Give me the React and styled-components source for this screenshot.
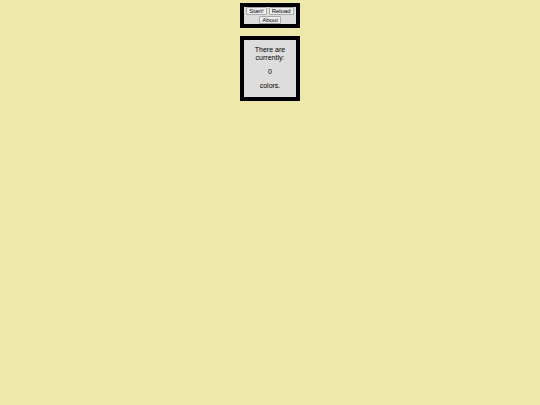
import React from "react";
import styled, { createGlobalStyle } from "styled-components";

const Global = createGlobalStyle`
  html, body { margin: 0; padding: 0; background: #eee8aa; }
  body { font-family: "Liberation Sans", Arial, sans-serif; }
`;

const Page = styled.div`
  display: flex;
  flex-direction: column;
  align-items: center;
  padding-top: 3px;
  gap: 8px;
`;

const Panel = styled.div`
  width: 52px;
  border: 4px solid #000;
  background: #dddddd;
  box-sizing: content-box;
  text-align: center;
  padding: ${(p) => p.$pad || "0"};
`;

const Buttons = styled.div`
  display: flex;
  flex-wrap: wrap;
  justify-content: center;
  gap: 1px 2px;
  padding: 0;
`;

const Button = styled.button`
  font-family: "Liberation Sans", Arial, sans-serif;
  font-size: 6px;
  line-height: 6px;
  height: 8px;
  padding: 0 2px;
  margin: 0;
  background: #efefef;
  border: 1px solid #a8a8a8;
  border-radius: 1px;
  color: #000;
`;

const Text = styled.p`
  margin: ${(p) => p.$m || "0"};
  font-size: 7px;
  line-height: 8px;
  color: #000;
`;

export default function App() {
  return (
    <>
      <Global />
      <Page>
        <Panel>
          <Buttons>
            <Button>Start!</Button>
            <Button>Reload</Button>
            <Button>About</Button>
          </Buttons>
        </Panel>
        <Panel $pad="6px 0 7px">
          <Text>There are currently:</Text>
          <Text $m="6px 0">0</Text>
          <Text>colors.</Text>
        </Panel>
      </Page>
    </>
  );
}
